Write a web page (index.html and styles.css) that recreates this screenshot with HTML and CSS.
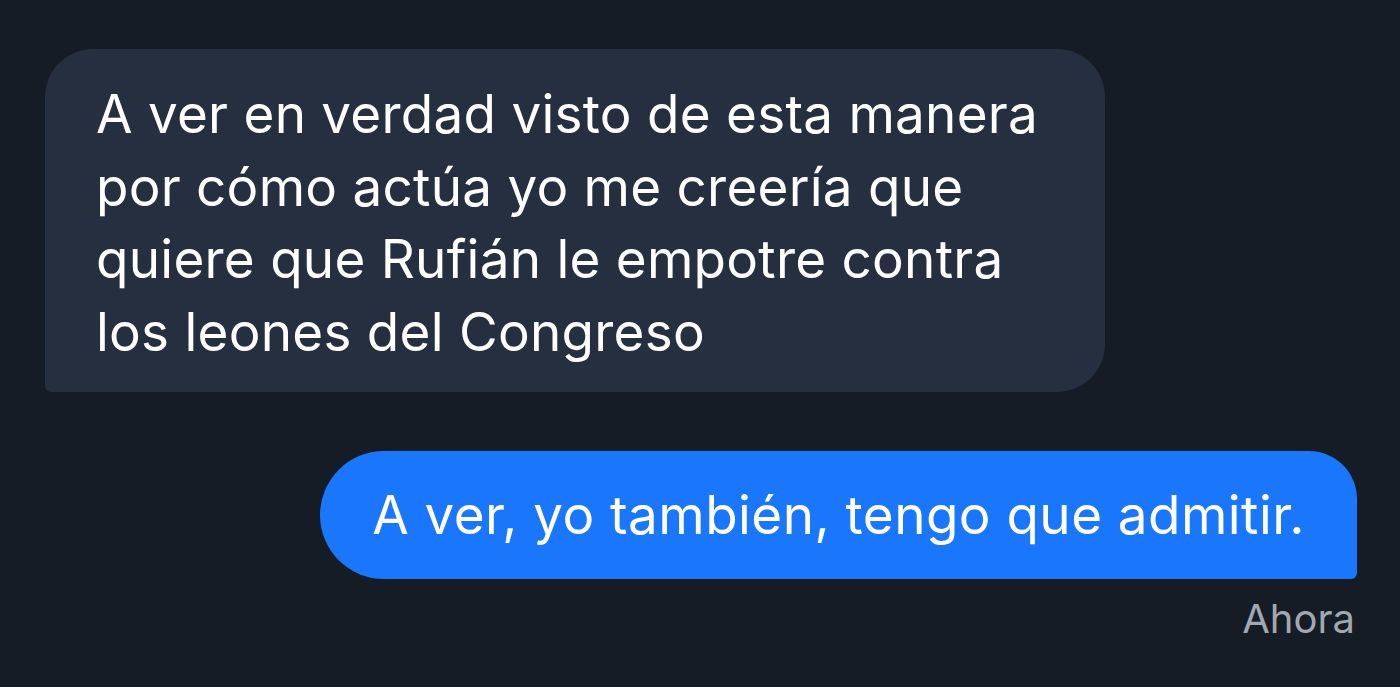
FILE: index.html
```html
<!DOCTYPE html>
<html lang="es">
<head>
<meta charset="utf-8">
<link rel="stylesheet" href="styles.css">
</head>
<body>
<main class="chat">
  <div class="msg received">A ver en verdad visto de esta manera por cómo actúa yo me creería que quiere que Rufián le empotre contra los leones del Congreso</div>
  <div class="msg sent">A ver, yo también, tengo que admitir.</div>
  <div class="time">Ahora</div>
</main>
</body>
</html>
```
FILE: styles.css
```css
html, body {
  margin: 0;
  padding: 0;
  background: #151c26;
  height: 100%;
}
.chat {
  font-family: Inter, "Noto Sans", sans-serif;
  color: #ffffff;
  display: flex;
  flex-direction: column;
  padding: 49px 43px 0 45px;
  box-sizing: border-box;
  height: 687px;
}
.msg {
  font-size: 53px;
  line-height: 72.5px;
  letter-spacing: 0.25px;
  box-sizing: border-box;
}
.received {
  align-self: flex-start;
  width: 1060px;
  background: #252f40;
  border-radius: 48px 48px 48px 6px;
  padding: 29px 51px 24px 51px;
}
.sent {
  align-self: flex-end;
  margin-top: 59px;
  background: #1a76fa;
  border-radius: 64px 48px 6px 64px;
  padding: 28px 52px 27px 52px;
  letter-spacing: 0.45px;
}
.time {
  align-self: flex-end;
  margin-top: 16px;
  font-size: 40px;
  line-height: 48px;
  color: #a2a8b1;
  padding-right: 2px;
}
```
